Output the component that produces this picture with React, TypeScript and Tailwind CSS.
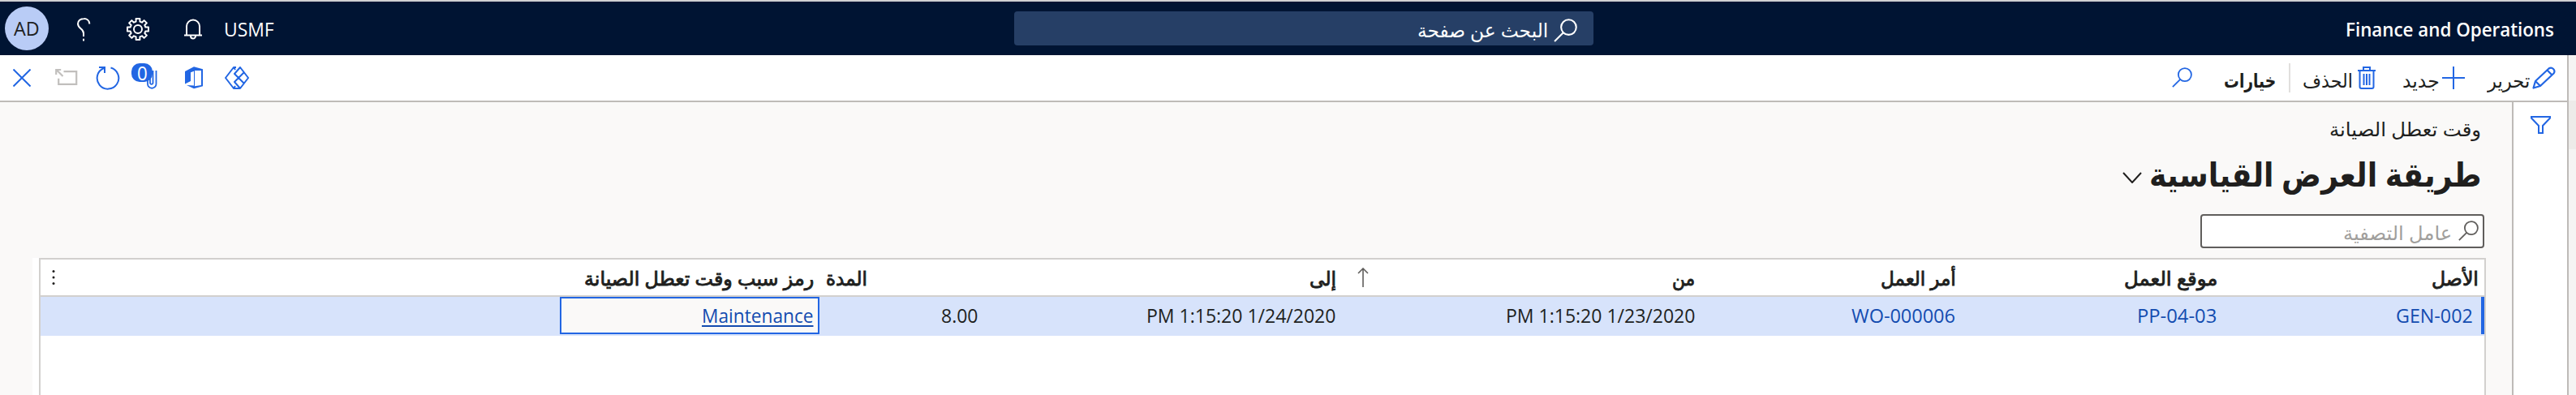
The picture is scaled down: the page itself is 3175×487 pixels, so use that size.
import { ReactNode, useLayoutEffect, useRef, useState } from 'react';

type LabelProps = { width: number; className?: string; children: ReactNode };

/* Single-line label whose glyph run is condensed to an exact width. */
function Label({ width, className = '', children }: LabelProps) {
  const ref = useRef<HTMLSpanElement>(null);
  const [scale, setScale] = useState(1);
  useLayoutEffect(() => {
    if (ref.current) setScale(width / ref.current.offsetWidth);
  }, [width]);
  return (
    <span dir="rtl" className={`block h-6 shrink-0 whitespace-nowrap text-[24px] leading-6 ${className}`} style={{ width }}>
      <span ref={ref} className="inline-block origin-right" style={{ transform: `scaleX(${scale})` }}>
        {children}
      </span>
    </span>
  );
}

function SearchIcon({ className }: { className: string }) {
  return (
    <svg viewBox="0 0 28 28" fill="none" stroke="currentColor" strokeWidth="2" className={className}>
      <circle cx="17.8" cy="10.2" r="9" />
      <path d="M11.4 16.6 1 27" />
    </svg>
  );
}

function TopBar() {
  return (
    <header dir="ltr" className="flex h-[66px] items-start bg-[#001433] pl-[6px] pr-[27px] text-white">
      <span className="mt-[6px] flex size-[54px] rounded-full bg-[#b9ccf6] pl-[11px] pt-[15px] text-[#201f1e]">
        <Label width={32}>AD</Label>
      </span>
      <svg viewBox="0 0 18 30" fill="none" stroke="currentColor" strokeWidth="2" className="ml-[34px] mt-[19px] h-[30px] w-[18px]">
        <path d="M16.2 8.5V7.5A6.5 6.5 0 0 0 9.6 2C5 2 2 4.8 2 8.2 2 14.5 9 14 9 20v4" />
        <path d="M9 26.8v2.6" />
      </svg>
      <svg viewBox="0 0 28 28" fill="none" stroke="currentColor" strokeWidth="2" strokeLinejoin="round" className="ml-[44px] mt-[20px] size-7">
        <circle cx="14" cy="14" r="5" />
        <path d="M11.6 1h4.8v3.6l2.6 1.1 2.6-2.6 3.3 3.3-2.6 2.6 1.1 2.6H27v4.8h-3.6L22.3 19l2.6 2.6-3.3 3.3-2.6-2.6-2.6 1.1V27h-4.8v-3.6L9 22.3l-2.6 2.6-3.3-3.3L5.7 19l-1.1-2.6H1v-4.8h3.6L5.7 9 3.1 6.4l3.3-3.3L9 5.7l2.6-1.1z" />
      </svg>
      <svg viewBox="0 0 22 26" fill="none" stroke="currentColor" strokeWidth="2" className="ml-[43px] mt-[21px] h-[26px] w-[22px]">
        <path d="M3 20.5V9.5a8 8 0 0 1 16 0v11M0 20.5h22M8 21.5a3 3 0 0 0 6 0" />
      </svg>
      <Label width={62} className="ml-[27px] mt-[22px]">USMF</Label>
      <div className="ml-[912px] mt-3 flex h-[42px] w-[714px] justify-end rounded-[4px] bg-[#263f66] pr-5">
        <Label width={161} className="mr-[7px] mt-[11px]">البحث عن صفحة</Label>
        <SearchIcon className="mt-[9px] size-[29px]" />
      </div>
      <Label width={257} className="ml-auto mt-[22px] font-semibold">Finance and Operations</Label>
    </header>
  );
}

function ActionBar() {
  return (
    <div dir="ltr" className="flex h-[58px] items-start border-b-2 border-[#bebbb8] bg-white pl-4 pr-[14px] text-[#2266e3]">
      <svg viewBox="0 0 22 22" fill="none" stroke="currentColor" strokeWidth="2" className="mt-[17px] size-[22px]">
        <path d="M.5.5l21 21M21.5.5l-21 21" />
      </svg>
      <svg viewBox="0 0 28 22" fill="none" stroke="#c1bfbd" strokeWidth="2.2" className="ml-[30px] mt-[16px] h-[22px] w-7">
        <path d="M10.500 4.200h15.700v15.600H4.200v-7M1.500 2 9.500 10M1.200 8V2h6" />
      </svg>
      <svg viewBox="0 0 30 30" fill="none" stroke="currentColor" strokeWidth="2" className="ml-[22px] mt-[13px] size-[30px]">
        <path d="M18.5 2.5A13.3 13.3 0 1 1 10 3M4 2h7v7" />
      </svg>
      <span className="relative ml-[14px] mt-[10px] h-8 w-8">
        <svg viewBox="0 0 32 32" className="h-8 w-8">
          <rect x="0" y="0" width="26" height="23" rx="10" fill="#2266e3" />
          <path d="M20 18v7.500a5.200 5.200 0 0 0 10.500 0V9M26.500 9v15.500a1.800 1.800 0 0 1-3.500 0V16" fill="none" stroke="#2266e3" strokeWidth="1.8" />
        </svg>
        <span className="absolute left-[7px] top-0 text-white">
          <Label width={13}>0</Label>
        </span>
      </span>
      <svg viewBox="0 0 22 28" className="ml-[34px] mt-[14px] h-7 w-[22px]">
        <path d="M0 6 11 .3 22 3.300v21L11 27.300 2 23l9 .500V5.800L7 7.300V18L0 21.500z" fill="currentColor" />
        <path d="M12 5 20 5v18l-8 1.200z" fill="#fff" />
      </svg>
      <svg viewBox="0 0 30 28" fill="none" stroke="currentColor" strokeWidth="2" strokeLinejoin="round" className="ml-[27px] mt-[14px] h-7 w-[30px]">
        <path d="M14 1h-3L1 14l10 13h8l10-13L19 1l-7 8 12 12M11 1l2 3M14 27h-3l2-3M19 27l-7-8L24 7" />
      </svg>
      <SearchIcon className="ml-auto mr-[39px] mt-[15px] size-[25px]" />
      <Label width={64} className="mr-[16px] mt-[19px] font-semibold text-[#201f1e]">خيارات</Label>
      <span className="mr-[15px] mt-[10px] h-9 w-[2px] bg-[#e1dfdd]" />
      <Label width={62} className="mr-[6px] mt-[19px] text-[#201f1e]">الحذف</Label>
      <svg viewBox="0 0 22 28" fill="none" stroke="currentColor" strokeWidth="2" className="mr-[33px] mt-[14px] h-7 w-[22px]">
        <path d="M0 5h22M7 5V1h8v4M2.5 5v20a2 2 0 0 0 2 2h13a2 2 0 0 0 2-2V5M7.5 9v14M11 9v14M14.5 9v14" />
      </svg>
      <Label width={46} className="mr-[3px] mt-[19px] text-[#201f1e]">جديد</Label>
      <svg viewBox="0 0 28 28" stroke="currentColor" strokeWidth="2" className="mr-[28px] mt-[14px] size-7">
        <path d="M0 14h28M14 0v28" />
      </svg>
      <Label width={52} className="mr-[3px] mt-[19px] text-[#201f1e]">تحرير</Label>
      <svg viewBox="0 0 29 28" fill="none" stroke="currentColor" strokeWidth="2.2" strokeLinejoin="round" className="mt-[14px] h-7 w-[29px]">
        <path d="M1.5 26.500 4 18 20.500 2.500a4.300 4.300 0 0 1 6 6L10 24zM4 18l6 6M18.500 4.500l6 6" />
      </svg>
    </div>
  );
}

type Column = { title: string; titleWidth: number; value: string; valueWidth: number; cell: string; head: string; body: string };

const columns: Column[] = [
  { title: 'الأصل', titleWidth: 58, value: 'GEN-002', valueWidth: 95, cell: 'w-[321px]', head: 'pr-[7px]', body: 'border-r-4 border-[#2266e3] pr-[10px] text-[#134cb0]' },
  { title: 'موقع العمل', titleWidth: 115, value: 'PP-04-03', valueWidth: 98, cell: 'w-[322px]', head: 'pr-2', body: 'pr-[9px] text-[#134cb0]' },
  { title: 'أمر العمل', titleWidth: 93, value: 'WO-000006', valueWidth: 128, cell: 'w-[322px]', head: 'pr-2', body: 'pr-[9px] text-[#134cb0]' },
  { title: 'من', titleWidth: 28, value: 'PM 1:15:20 1/23/2020', valueWidth: 233, cell: 'w-[442px]', head: 'pr-2', body: 'pr-2 text-[#201f1e]' },
  { title: 'إلى', titleWidth: 33, value: 'PM 1:15:20 1/24/2020', valueWidth: 233, cell: 'w-[443px]', head: 'pr-2', body: 'pr-[9px] text-[#201f1e]' },
  { title: 'المدة', titleWidth: 51, value: '8.00', valueWidth: 45, cell: 'w-[202px]', head: 'justify-end pl-2', body: 'pr-[7px] text-[#201f1e]' },
];

function Grid() {
  return (
    <div className="ml-10 mr-8 flex h-[169px] flex-col bg-white pl-2">
      <div className="flex grow flex-col border-2 border-b-0 border-[#d2d0ce]">
        <div className="flex h-[46px] border-b-2 border-[#d2d0ce] text-[#201f1e] [-webkit-text-stroke:0.9px_currentColor]">
          {columns.map((c) => (
            <div key={c.title} className={`flex shrink-0 pt-[11px] ${c.cell} ${c.head}`}>
              <Label width={c.titleWidth}>{c.title}</Label>
              {c.title === 'من' && (
                <svg viewBox="0 0 14 24" fill="none" stroke="#605e5c" strokeWidth="1.6" className="ml-[18px] mr-auto mt-[-1px] h-6 w-[14px]">
                  <path d="M7 24V1M1 7l6-6 6 6" />
                </svg>
              )}
            </div>
          ))}
          <div className="flex w-[320px] shrink-0 pr-[7px] pt-[11px]">
            <Label width={283}>رمز سبب وقت تعطل الصيانة</Label>
          </div>
          <svg viewBox="0 0 4 20" className="ml-[14px] mr-auto mt-[12px] h-5 w-1" fill="#201f1e">
            <circle cx="2" cy="2.5" r="1.5" />
            <circle cx="2" cy="10" r="1.5" />
            <circle cx="2" cy="17.5" r="1.5" />
          </svg>
        </div>
        <div className="flex h-12 bg-[#d7e3fb]">
          {columns.map((c) => (
            <div key={c.title} className={`flex h-[46px] shrink-0 pt-[11px] ${c.cell} ${c.body}`}>
              <Label width={c.valueWidth}><bdi dir="ltr">{c.value}</bdi></Label>
            </div>
          ))}
          <div className="flex h-[46px] w-[320px] shrink-0 border-2 border-[#2266e3] bg-[#faf9f8] pr-[6px] pt-[9px] text-[#134cb0]">
            <Label width={137}><span className="underline decoration-2 underline-offset-[3px]">Maintenance</span></Label>
          </div>
        </div>
      </div>
    </div>
  );
}

export default function App() {
  return (
    <div
      dir="ltr"
      className="flex h-[487px] w-[3175px] flex-col overflow-hidden border-t-2 border-[#d0d0d2] bg-[#faf9f8] font-['Open_Sans','DejaVu_Sans',sans-serif]"
    >
      <TopBar />
      <div className="flex grow">
        <div className="flex w-[3164px] shrink-0 flex-col">
          <ActionBar />
          <main className="flex grow">
            <section dir="rtl" className="flex w-[3096px] flex-col text-[#201f1e]">
              <Label width={187} className="mr-[38px] mt-[21px]">وقت تعطل الصيانة</Label>
              <div className="mr-[38px] mt-5 flex h-[46px] items-start">
                <Label width={409} className="h-[46px]! text-[41px]! leading-[46px]! font-bold">طريقة العرض القياسية</Label>
                <svg viewBox="0 0 24 14" fill="none" stroke="#201f1e" strokeWidth="2" className="mr-[9px] mt-[21px] h-[14px] w-6">
                  <path d="M1 1l11 12L23 1" />
                </svg>
              </div>
              <div className="mr-[34px] mt-[27px] flex h-[42px] w-[350px] rounded-[4px] border-2 border-[#605e5c] bg-white pr-[5px] text-[#a19f9d]">
                <SearchIcon className="mt-[6px] size-[25px] text-[#605e5c]" />
                <Label width={134} className="mr-[8px] mt-[9px]">عامل التصفية</Label>
              </div>
              <div className="mt-3">
                <Grid />
              </div>
            </section>
            <aside className="flex grow justify-center border-l-2 border-[#bebbb8] bg-white pt-[17px] text-[#2266e3]">
              <svg viewBox="0 0 25 22" fill="none" stroke="currentColor" strokeWidth="2" className="h-[22px] w-[25px]">
                <path d="M1 1h23v1.5L15 12v9h-5v-9L1 2.5z" />
              </svg>
            </aside>
          </main>
        </div>
        <div className="flex grow flex-col border-l-2 border-[#bebbb8] bg-[#f5f4f3]">
          <div className="mt-[56px] h-[60px] bg-[#edebe9]" />
        </div>
      </div>
    </div>
  );
}
